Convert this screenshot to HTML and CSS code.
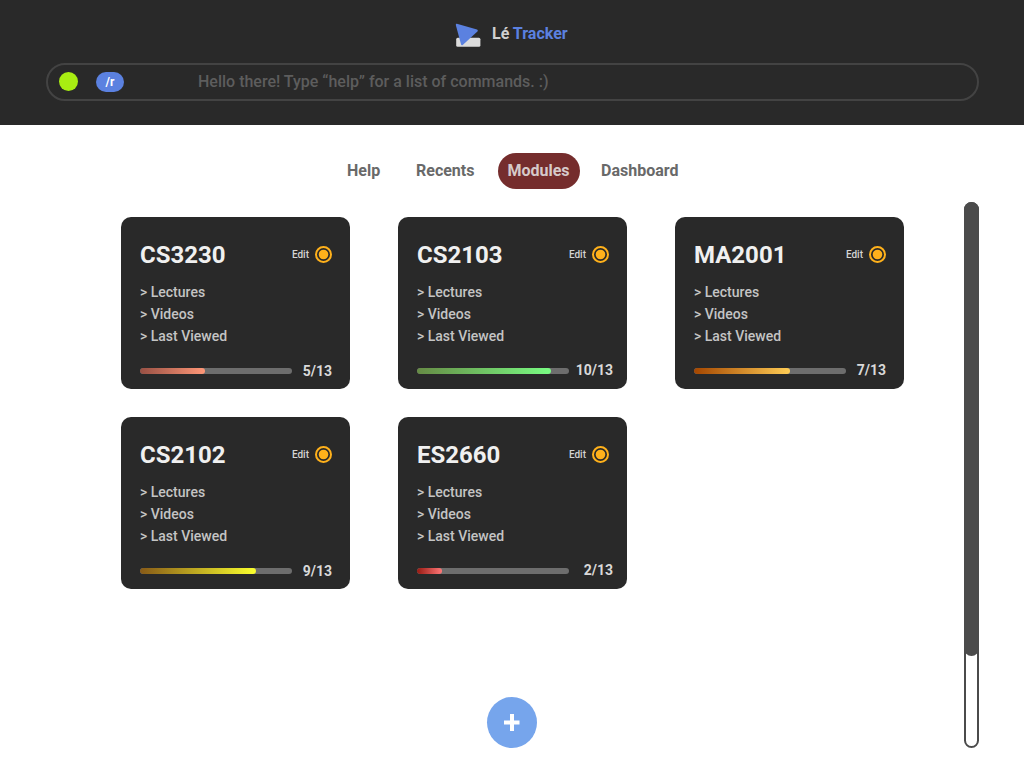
FILE: index.html
```
<!DOCTYPE html>
<html lang="en">
<head>
<meta charset="utf-8">
<title>Lé Tracker</title>
<link rel="stylesheet" href="styles.css">
</head>
<body>
<header class="header">
  <div class="brand">
    <svg class="logo" width="26" height="24" viewBox="0 0 26 24">
      <rect x="1.2" y="14.7" width="24.2" height="9" rx="1.5" fill="#dcdcdc"/>
      <path d="M1.900 .8 22 6.600Q23.500 7.200 22.400 8.400L8 21.700Q6.600 22.900 6 21.300L.8 2Q.6 .6 1.900 .8Z" fill="#5b81e0"/>
    </svg>
    <div class="brand-name">Lé <span class="brand-accent">Tracker</span></div>
  </div>
  <div class="command">
    <span class="status"></span>
    <span class="mode">/r</span>
    <span class="hint">Hello there! Type “help” for a list of commands. :)</span>
  </div>
</header>
<nav class="tabs">
  <a class="tab tab-help">Help</a>
  <a class="tab tab-recents">Recents</a>
  <a class="tab tab-active">Modules</a>
  <a class="tab tab-dashboard">Dashboard</a>
</nav>
<main class="main">
  <section class="modules">
    <article class="card">
      <div class="card-head"><h2 class="title">CS3230</h2><span class="edit">Edit</span><svg class="radio" width="18" height="18" viewBox="0 0 18 18"><circle class="ring" cx="8.5" cy="9.5" r="7.5"/><circle class="dot" cx="8.5" cy="9.5" r="4.800"/></svg></div>
      <ul class="links"><li>&gt; Lectures</li><li>&gt; Videos</li><li>&gt; Last Viewed</li></ul>
      <div class="progress"><div class="track"><div class="fill coral" style="width:65px"></div></div><span class="count low">5/13</span></div>
    </article>
    <article class="card">
      <div class="card-head"><h2 class="title">CS2103</h2><span class="edit">Edit</span><svg class="radio" width="18" height="18" viewBox="0 0 18 18"><circle class="ring" cx="8.5" cy="9.5" r="7.5"/><circle class="dot" cx="8.5" cy="9.5" r="4.800"/></svg></div>
      <ul class="links"><li>&gt; Lectures</li><li>&gt; Videos</li><li>&gt; Last Viewed</li></ul>
      <div class="progress wide"><div class="track"><div class="fill green" style="width:134px"></div></div><span class="count">10/13</span></div>
    </article>
    <article class="card">
      <div class="card-head"><h2 class="title">MA2001</h2><span class="edit">Edit</span><svg class="radio" width="18" height="18" viewBox="0 0 18 18"><circle class="ring" cx="8.5" cy="9.5" r="7.5"/><circle class="dot" cx="8.5" cy="9.5" r="4.800"/></svg></div>
      <ul class="links"><li>&gt; Lectures</li><li>&gt; Videos</li><li>&gt; Last Viewed</li></ul>
      <div class="progress"><div class="track"><div class="fill amber" style="width:96px"></div></div><span class="count">7/13</span></div>
    </article>
    <article class="card">
      <div class="card-head"><h2 class="title">CS2102</h2><span class="edit">Edit</span><svg class="radio" width="18" height="18" viewBox="0 0 18 18"><circle class="ring" cx="8.5" cy="9.5" r="7.5"/><circle class="dot" cx="8.5" cy="9.5" r="4.800"/></svg></div>
      <ul class="links"><li>&gt; Lectures</li><li>&gt; Videos</li><li>&gt; Last Viewed</li></ul>
      <div class="progress"><div class="track"><div class="fill yellow" style="width:116px"></div></div><span class="count low">9/13</span></div>
    </article>
    <article class="card">
      <div class="card-head"><h2 class="title">ES2660</h2><span class="edit">Edit</span><svg class="radio" width="18" height="18" viewBox="0 0 18 18"><circle class="ring" cx="8.5" cy="9.5" r="7.5"/><circle class="dot" cx="8.5" cy="9.5" r="4.800"/></svg></div>
      <ul class="links"><li>&gt; Lectures</li><li>&gt; Videos</li><li>&gt; Last Viewed</li></ul>
      <div class="progress wide"><div class="track"><div class="fill red" style="width:25px"></div></div><span class="count">2/13</span></div>
    </article>
  </section>
  <div class="scrollbar"><div class="thumb"></div></div>
</main>
<button class="add" aria-label="Add module">
  <svg class="plus" width="16" height="17" viewBox="0 0 16 17"><path d="M6 0h4v6.500h5.500v4H10V17H6v-6.500H0v-4h6Z" fill="#fff"/></svg>
</button>
</body>
</html>
```

FILE: styles.css
```
* { box-sizing: border-box; }
body {
  margin: 0;
  height: 768px;
  overflow: hidden;
  position: relative;
  background: #fff;
  font-family: Roboto, "Liberation Sans", sans-serif;
  font-weight: 500;
}
.header { height: 125px; padding: 23px 45px 0 46px; background: #292929; }
.brand { display: flex; height: 40px; padding-left: 409px; }
.logo { display: block; flex: none; }
.brand-name { margin-left: 11px; font-size: 16px; font-weight: 700; line-height: 21px; color: #d0d0d0; }
.brand-accent { color: #5b81e0; }
.command {
  display: flex;
  align-items: center;
  height: 38px;
  padding-left: 10px;
  border: 2px solid #434343;
  border-radius: 19px;
}
.status { width: 19px; height: 19px; margin: 0 0 1px 1px; border-radius: 50%; background: #a8ed12; }
.mode {
  width: 28px;
  margin-left: 18px;
  border-radius: 10px;
  background: #5b81e0;
  color: #fff;
  font-size: 12px;
  font-weight: 700;
  line-height: 20px;
  text-align: center;
}
.hint { margin-left: 74px; font-size: 16px; line-height: 20px; color: #5d5d5d; }
.tabs { display: flex; height: 64px; padding: 28px 0 0 347px; }
.tab { height: 36px; font-size: 16px; font-weight: 700; line-height: 36px; color: #696969; white-space: nowrap; }
.tab-help { width: 69px; }
.tab-recents { width: 82px; }
.tab-active { width: 82px; padding-right: 1px; border-radius: 18px; background: #752d2d; color: #d6caca; text-align: center; }
.tab-dashboard { margin-left: 21px; }
.main { display: flex; justify-content: space-between; padding: 13px 45px 0 121px; }
.modules {
  display: grid;
  grid-template-columns: repeat(3, 229px);
  grid-auto-rows: 172px;
  gap: 28px 48px;
  align-content: start;
  padding-top: 15px;
}
.card { padding: 23px 17px 0 19px; border-radius: 10px; background: #292929; color: #c4c4c4; }
.card-head { display: flex; align-items: center; height: 29px; }
.title { flex: 1; margin: 0; padding-top: 2px; font-size: 24px; font-weight: 700; line-height: 29px; color: #f0f0f0; }
.edit { font-size: 10px; line-height: 12px; color: #d4d4d4; }
.radio { margin: 0 0 1px 6px; overflow: visible; }
.ring { fill: none; stroke: #ffb11b; stroke-width: 2; }
.dot { fill: #ffb11b; }
.links { list-style: none; margin: 12px 0 0; padding: 0; font-size: 14px; line-height: 22px; }
.progress { display: flex; align-items: center; justify-content: space-between; height: 16px; margin: 16px 1px 0 0; }
.wide { margin-right: -3px; }
.track { flex: none; width: 152px; height: 6px; border-radius: 3px; background: #6d6d6d; overflow: hidden; }
.fill { height: 6px; border-radius: 3px; }
.coral { background: linear-gradient(90deg, #985044, #ff9777); }
.green { background: linear-gradient(90deg, #668b45, #79fc83); }
.amber { background: linear-gradient(90deg, #a44600, #ffcd55); }
.yellow { background: linear-gradient(90deg, #875a17, #faff2d); }
.red { background: linear-gradient(90deg, #981a12, #ff7777); }
.count { font-size: 14px; font-weight: 700; line-height: 16px; padding-bottom: 2px; color: #d9d9d9; }
.low { padding-bottom: 0; }
.scrollbar { width: 15px; height: 546px; border: 2px solid #4b4b4b; border-radius: 8px; }
.thumb { width: 15px; height: 454px; margin: -2px 0 0 -2px; border-radius: 8px; background: #4b4b4b; }
.add {
  position: absolute;
  left: 487px;
  top: 697px;
  width: 50px;
  height: 51px;
  display: flex;
  align-items: center;
  justify-content: center;
  padding: 0;
  border: 0;
  border-radius: 50%;
  background: #76a5ec;
}
.plus { margin-bottom: 1px; }
```
